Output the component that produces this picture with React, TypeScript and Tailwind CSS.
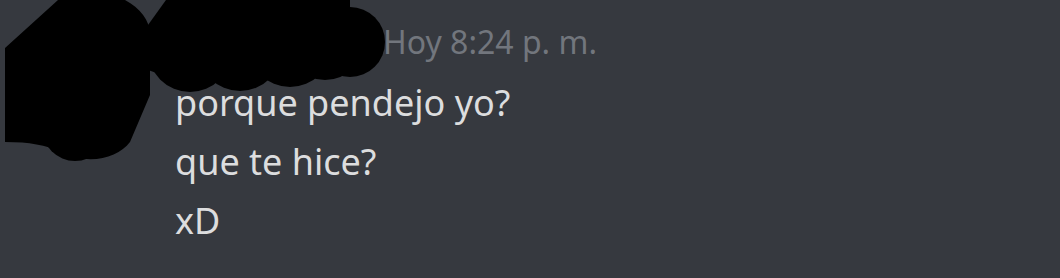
export default function App() {
  return (
    <div className="relative w-[1060px] h-[278px] overflow-hidden bg-[#36393f] font-['Noto_Sans',sans-serif]">
      {/* redaction scribble over avatar + username */}
      <svg
        className="absolute left-0 top-0"
        width="400"
        height="170"
        viewBox="0 0 400 170"
      >
        <g fill="#000">
          <path d="M5,48 L58,0 L125,0 C140,8 150,20 150,35 L150,95 L130,142 C118,158 88,166 62,152 C45,145 30,142 5,142 Z" />
          <circle cx="75" cy="128" r="33" />
          <path d="M166,0 L148,25 L148,70 L200,88 L200,0 Z" />
          <rect x="180" y="0" width="170" height="55" />
          <circle cx="190" cy="50" r="42" />
          <circle cx="240" cy="49" r="42" />
          <circle cx="290" cy="45" r="42" />
          <circle cx="325" cy="40" r="40" />
          <circle cx="350" cy="42" r="35" />
        </g>
      </svg>

      <div className="pl-[175px] pt-[16px]">
        <div className="pl-[208px] h-[52px] text-[32px] leading-[52px] text-[#72767d]">
          Hoy 8:24 p. m.
        </div>
        <div className="flex flex-col pt-[5px] text-[36px] leading-[59px] text-[#dcddde]">
          <span>porque pendejo yo?</span>
          <span>que te hice?</span>
          <span>xD</span>
        </div>
      </div>
    </div>
  )
}
